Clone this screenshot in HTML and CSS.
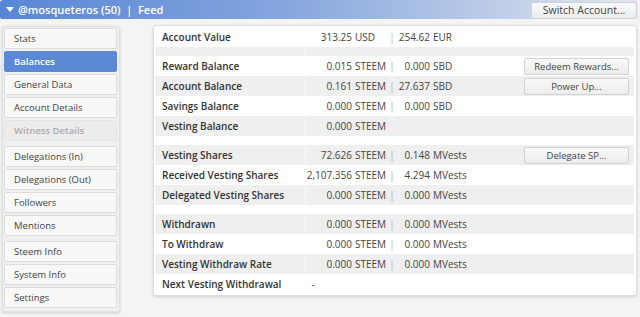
FILE: index.html
```html
<!DOCTYPE html>
<html lang="en">
<head>
    <meta charset="UTF-8">
    <title>Balances</title>
    <link rel="stylesheet" href="styles.css">
</head>
<body>
    <!-- Top bar -->
    <div class="topbar">
        <div class="account-name">
            <span class="caret"></span>
            @mosqueteros (50)&nbsp;&nbsp;|&nbsp;&nbsp;Feed
        </div>
        <button class="btn switch-btn">Switch Account...</button>
    </div>

    <div class="layout">
        <!-- Sidebar -->
        <div class="sidebar">
            <div class="nav-group">
                <div class="nav-item">Stats</div>
                <div class="nav-item active">Balances</div>
                <div class="nav-item">General Data</div>
                <div class="nav-item">Account Details</div>
                <div class="nav-item disabled">Witness Details</div>
            </div>
            <div class="nav-group">
                <div class="nav-item">Delegations (In)</div>
                <div class="nav-item">Delegations (Out)</div>
                <div class="nav-item">Followers</div>
                <div class="nav-item">Mentions</div>
            </div>
            <div class="nav-group">
                <div class="nav-item">Steem Info</div>
                <div class="nav-item">System Info</div>
                <div class="nav-item">Settings</div>
            </div>
        </div>

        <!-- Balances table -->
        <div class="panel">
            <table class="balances">
                <tr>
                    <td class="label">Account Value</td>
                    <td class="num">313.25</td><td class="unit">USD</td>
                    <td class="sep">|</td>
                    <td class="num2">254.62</td><td class="unit">EUR</td>
                    <td class="fill"></td><td class="action"></td>
                </tr>
                <tr class="spacer"><td class="label"></td><td colspan="7"></td></tr>
                <tr>
                    <td class="label">Reward Balance</td>
                    <td class="num">0.015</td><td class="unit">STEEM</td>
                    <td class="sep">|</td>
                    <td class="num2">0.000</td><td class="unit">SBD</td>
                    <td class="fill"></td><td class="action"><button class="btn">Redeem Rewards...</button></td>
                </tr>
                <tr>
                    <td class="label">Account Balance</td>
                    <td class="num">0.161</td><td class="unit">STEEM</td>
                    <td class="sep">|</td>
                    <td class="num2">27.637</td><td class="unit">SBD</td>
                    <td class="fill"></td><td class="action"><button class="btn">Power Up...</button></td>
                </tr>
                <tr>
                    <td class="label">Savings Balance</td>
                    <td class="num">0.000</td><td class="unit">STEEM</td>
                    <td class="sep">|</td>
                    <td class="num2">0.000</td><td class="unit">SBD</td>
                    <td class="fill"></td><td class="action"></td>
                </tr>
                <tr>
                    <td class="label">Vesting Balance</td>
                    <td class="num">0.000</td><td class="unit">STEEM</td>
                    <td class="sep"></td>
                    <td class="num2"></td><td class="unit"></td>
                    <td class="fill"></td><td class="action"></td>
                </tr>
                <tr class="spacer"><td class="label"></td><td colspan="7"></td></tr>
                <tr>
                    <td class="label">Vesting Shares</td>
                    <td class="num">72.626</td><td class="unit">STEEM</td>
                    <td class="sep">|</td>
                    <td class="num2">0.148</td><td class="unit">MVests</td>
                    <td class="fill"></td><td class="action"><button class="btn">Delegate SP...</button></td>
                </tr>
                <tr>
                    <td class="label">Received Vesting Shares</td>
                    <td class="num">2,107.356</td><td class="unit">STEEM</td>
                    <td class="sep">|</td>
                    <td class="num2">4.294</td><td class="unit">MVests</td>
                    <td class="fill"></td><td class="action"></td>
                </tr>
                <tr>
                    <td class="label">Delegated Vesting Shares</td>
                    <td class="num">0.000</td><td class="unit">STEEM</td>
                    <td class="sep">|</td>
                    <td class="num2">0.000</td><td class="unit">MVests</td>
                    <td class="fill"></td><td class="action"></td>
                </tr>
                <tr class="spacer"><td class="label"></td><td colspan="7"></td></tr>
                <tr>
                    <td class="label">Withdrawn</td>
                    <td class="num">0.000</td><td class="unit">STEEM</td>
                    <td class="sep">|</td>
                    <td class="num2">0.000</td><td class="unit">MVests</td>
                    <td class="fill"></td><td class="action"></td>
                </tr>
                <tr>
                    <td class="label">To Withdraw</td>
                    <td class="num">0.000</td><td class="unit">STEEM</td>
                    <td class="sep">|</td>
                    <td class="num2">0.000</td><td class="unit">MVests</td>
                    <td class="fill"></td><td class="action"></td>
                </tr>
                <tr>
                    <td class="label">Vesting Withdraw Rate</td>
                    <td class="num">0.000</td><td class="unit">STEEM</td>
                    <td class="sep">|</td>
                    <td class="num2">0.000</td><td class="unit">MVests</td>
                    <td class="fill"></td><td class="action"></td>
                </tr>
                <tr>
                    <td class="label">Next Vesting Withdrawal</td>
                    <td class="text" colspan="7">-</td>
                </tr>
            </table>
        </div>
    </div>
</body>
</html>
```

FILE: styles.css
```css
* {
    margin: 0;
    padding: 0;
    box-sizing: border-box;
}

body {
    font-family: "Open Sans", sans-serif;
    font-size: 10px;
    color: #444;
    background: #f4f4f4;
    width: 640px;
    height: 317px;
    overflow: hidden;
}

/* Top bar */
.topbar {
    height: 19px;
    margin-right: 2px;
    display: flex;
    align-items: center;
    justify-content: space-between;
    background: linear-gradient(to right, #5886d6 0%, #86a6dd 45%, #e3e8ef 100%);
    border-radius: 3px 3px 2px 2px;
    padding-left: 6px;
}

.account-name {
    display: flex;
    align-items: center;
    gap: 4px;
    color: #fff;
    font-weight: 600;
    font-size: 11px;
}

.caret {
    width: 0;
    height: 0;
    border-left: 4px solid transparent;
    border-right: 4px solid transparent;
    border-top: 5px solid #fff;
}

.btn {
    font-family: "Open Sans", sans-serif;
    font-size: 9.5px;
    color: #444;
    background: linear-gradient(#f9f9f9, #ececec);
    border: 1px solid #d2d2d2;
    border-radius: 2px;
    height: 17px;
    width: 105px;
    line-height: 15px;
}

.switch-btn {
    width: 106px;
    height: 17px;
    margin-top: 2px;
    margin-right: 1px;
    font-size: 10.5px;
}

/* Layout */
.layout {
    display: flex;
    align-items: flex-start;
    padding: 6px 3px 0 2px;
    gap: 33px;
}

/* Sidebar */
.sidebar {
    width: 118px;
    margin-top: 1px;
    padding: 1px 2px 3px 1px;
    background: #efefef;
    border: 1px solid #e0e0e0;
    border-radius: 2px;
    box-shadow: 0 1px 3px rgba(0, 0, 0, 0.15);
    display: flex;
    flex-direction: column;
    gap: 5px;
}

.nav-group {
    display: flex;
    flex-direction: column;
    gap: 2px;
}

.nav-item {
    height: 21px;
    line-height: 19px;
    padding-left: 9px;
    font-size: 9.5px;
    background: #f8f8f8;
    border: 1px solid #dcdcdc;
    border-radius: 2px;
    color: #444;
}

.nav-item.active {
    background: #5b89d6;
    border-color: #5b89d6;
    color: #fff;
    font-weight: 600;
}

.nav-item.disabled {
    background: #ececec;
    border-color: #e4e4e4;
    color: #acacac;
    font-weight: 600;
}

/* Balances panel */
.panel {
    flex: 1;
    background: #fff;
    border: 1px solid #dedede;
    border-radius: 3px;
    box-shadow: 0 1px 3px rgba(0, 0, 0, 0.15);
    padding: 0 2px 1px 1px;
}

.balances {
    width: 100%;
    border-collapse: collapse;
    table-layout: fixed;
}

.balances tr {
    height: 20px;
}

.balances tr:nth-child(even) {
    background: #efefef;
}

.balances tr.spacer {
    height: 9px;
}

.balances tr:first-child {
    height: 21px;
}

.balances td {
    padding: 0;
    white-space: nowrap;
    vertical-align: middle;
}

.label {
    width: 150px;
    padding-left: 7px !important;
    font-weight: 600;
    color: #333;
    border-right: 1px solid rgba(255, 255, 255, 0.7);
}

.num {
    width: 47px;
    text-align: right;
}

.unit {
    width: 34px;
    padding-left: 3px !important;
}

.sep {
    width: 12px;
    text-align: center;
    color: #b0b0b0;
}

.num2 {
    width: 32px;
    text-align: right;
}

.fill {
    width: auto;
}

.action {
    width: 110px;
    text-align: left;
}

.action .btn {
    display: block;
    height: 17px;
}

.text {
    padding-left: 6px !important;
}
```
